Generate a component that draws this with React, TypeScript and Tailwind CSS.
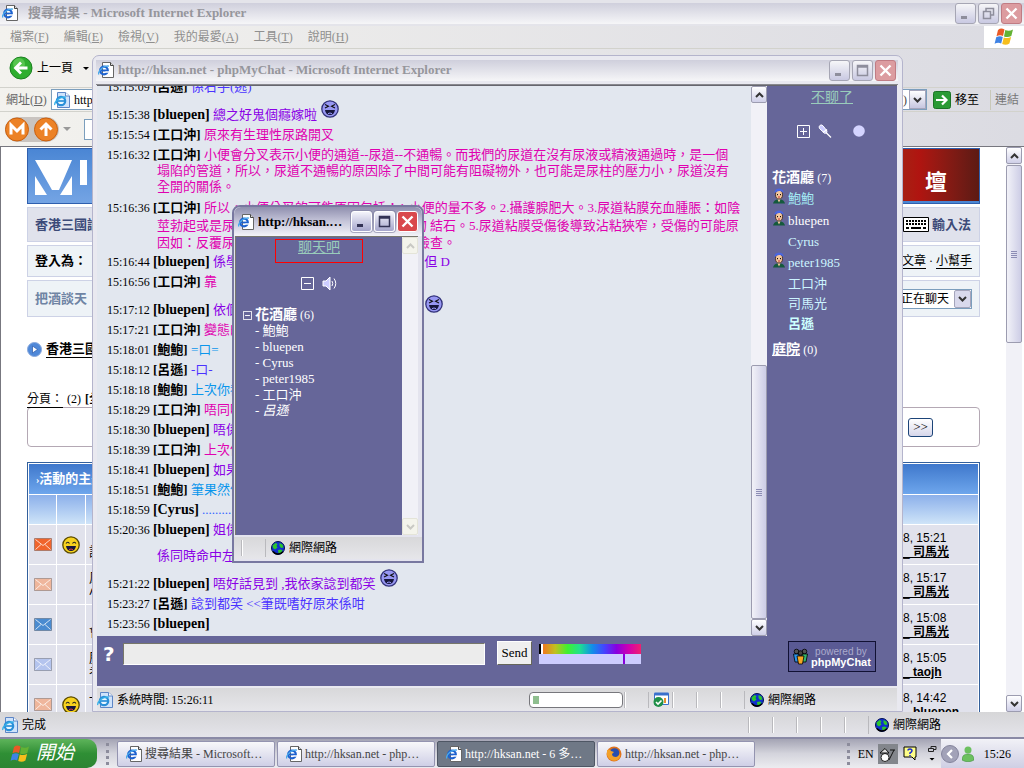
import React from "react";
import { clsx } from "clsx";

type Speaker = "bluepen" | "工口沖" | "鮑鮑" | "呂遜" | "Cyrus";

interface Message {
  time: string;
  from: Speaker;
  lines: string[];
  laugh?: boolean;
  tall?: boolean;
}

const speakerColor: Record<Speaker, string> = {
  bluepen: "text-[#8a00e6]",
  "工口沖": "text-[#e000b0]",
  "鮑鮑": "text-[#0a96ec]",
  "呂遜": "text-[#4a33ff]",
  Cyrus: "text-[#3366ff]",
};

const messages: Message[] = [
  { time: "15:15:09", from: "呂遜", lines: ["係右手(逃)"] },
  { time: "15:15:38", from: "bluepen", lines: ["總之好鬼個癮嫁啦"], laugh: true },
  { time: "15:15:54", from: "工口沖", lines: ["原來有生理性尿路開叉"] },
  {
    time: "15:16:32",
    from: "工口沖",
    lines: [
      "小便會分叉表示小便的通道--尿道--不通暢。而我們的尿道在沒有尿液或精液通過時，是一個",
      "塌陷的管道，所以，尿道不通暢的原因除了中間可能有阻礙物外，也可能是尿柱的壓力小，尿道沒有",
      "全開的關係。",
    ],
  },
  {
    time: "15:16:36",
    from: "工口沖",
    tall: true,
    lines: [
      "所以，小便分叉的可能原因包括：1.小便的量不多。2.攝護腺肥大。3.尿道粘膜充血腫脹：如陰",
      "莖勃起或是尿道口被分泌物堵住。4.尿道有異物 結石。5.尿道粘膜受傷後導致沾粘狹窄，受傷的可能原",
      "因如：反覆尿道發炎、外傷等，最好到醫院做檢查。",
    ],
  },
  { time: "15:16:44", from: "bluepen", lines: ["係學校又唔可以成日走出去廁所咁樣,但 D"] },
  { time: "15:16:56", from: "工口沖", lines: ["靠"] },
  { time: "15:17:12", from: "bluepen", lines: ["依個話題都可以講得咁詳細真係好勁"], laugh: true },
  { time: "15:17:21", from: "工口沖", lines: ["變態的人是你"] },
  { time: "15:18:01", from: "鮑鮑", lines: ["=口="] },
  { time: "15:18:12", from: "呂遜", lines: ["-口-"] },
  { time: "15:18:18", from: "鮑鮑", lines: ["上次你都係咁講"] },
  { time: "15:18:29", from: "工口沖", lines: ["唔同唔同"] },
  { time: "15:18:30", from: "bluepen", lines: ["唔係我講架"] },
  { time: "15:18:39", from: "工口沖", lines: ["上次係另一樣"] },
  { time: "15:18:41", from: "bluepen", lines: ["如果係就好笑"] },
  { time: "15:18:51", from: "鮑鮑", lines: ["筆果然係好勁"] },
  { time: "15:18:59", from: "Cyrus", lines: ["......................"] },
  { time: "15:20:36", from: "bluepen", lines: ["姐係你哋兩個人 , 都一齊講緊同樣咁", "係同時命中左對方"] },
  { time: "15:21:22", from: "bluepen", lines: ["唔好話見到 ,我依家諗到都笑"], laugh: true },
  { time: "15:23:27", from: "呂遜", lines: ["諗到都笑 <<筆既嗜好原來係咁"] },
  { time: "15:23:56", from: "bluepen", lines: [""] },
];

const menus = [
  ["檔案", "F"],
  ["編輯", "E"],
  ["檢視", "V"],
  ["我的最愛", "A"],
  ["工具", "T"],
  ["說明", "H"],
];

const topics = [
  { time: "8, 15:21", who: "司馬光", mail: "#f0642c", smile: true, title: ["", "討論"] },
  { time: "8, 15:17", who: "司馬光", mail: "#efb69c", smile: false, title: ["風雲", "小說"] },
  { time: "8, 15:08", who: "司馬光", mail: "#4a8bd0", smile: false, title: ["", "會員"] },
  { time: "8, 15:05", who: "taojh", mail: "#b4c4ee", smile: false, title: ["歷史", "考證"] },
  { time: "8, 14:42", who: "bluepen", mail: "#efb69c", smile: true, title: ["一般", ""] },
];

/* ---------- icons ---------- */

function IeIcon() {
  return (
    <svg className="h-4 w-4 shrink-0" viewBox="0 0 16 16" aria-hidden="true">
      <path d="M4.5.5h8l3 3v12h-11z" fill="#fff" stroke="#666" />
      <path d="M12.5.5v3h3" fill="#ddd" stroke="#444" />
      <circle cx="6" cy="8.5" r="3.8" fill="none" stroke="#1d62cf" strokeWidth="2.2" />
      <path d="M3 8.5h7" stroke="#1d62cf" strokeWidth="1.8" />
      <path d="M7.5 10h4" stroke="#fff" strokeWidth="1.4" />
      <path d="M.8 12.5C-.5 9 6 3 11 4.2" fill="none" stroke="#49a8ea" strokeWidth="1.3" />
    </svg>
  );
}

function PageIcon() {
  return (
    <svg className="h-4 w-4 shrink-0" viewBox="0 0 16 16" aria-hidden="true">
      <path d="M3.5.5h8l4 3.500v11.500h-12z" fill="#cfe3fb" stroke="#5d86c6" />
      <path d="M11.5.5V4h4" fill="#fff" stroke="#5d86c6" />
      <circle cx="7" cy="9" r="4.2" fill="#e8f6ff" stroke="#2a8fd8" strokeWidth="2.2" />
      <path d="M4 9h7" stroke="#2a8fd8" strokeWidth="1.7" />
      <path d="M.8 13C0 10 6 4 12 5.2" fill="none" stroke="#35b0e8" strokeWidth="1.3" />
    </svg>
  );
}

function Globe() {
  return (
    <svg className="h-[14px] w-[14px] shrink-0" viewBox="0 0 14 14" aria-hidden="true">
      <circle cx="7" cy="7" r="6.5" fill="#102fd0" stroke="#001050" />
      <path d="M1.5 4.500 4.500 2l2 1-1 2 1 1.500-2.500 2-2-1.500zM8.500 2l3 1.500 1 3-2.500.5-1.500-2zM7 9l3-.5 1.500 1-1.500 2.500-2.500.5z" fill="#2cc52c" />
      <path d="M2 10.500c2 3.200 7 3.400 10 .3" fill="none" stroke="#000" strokeWidth="1.5" />
    </svg>
  );
}

function Laugh({ yellow, className }: { yellow?: boolean; className?: string }) {
  return (
    <svg className={clsx("h-[18px] w-[18px]", className)} viewBox="0 0 18 18" aria-hidden="true">
      <circle cx="9" cy="9" r="8.2" fill={yellow ? "#f7d21e" : "#9797f2"} stroke={yellow ? "#5a4a00" : "#33337a"} strokeWidth="1.3" />
      {yellow ? (
        <path d="M4 7.500q1.500-2.500 3.500 0M10.500 7.500q1.500-2.500 3.500 0" fill="none" stroke="#222" strokeWidth="1.1" />
      ) : (
        <path d="m4 4.500 3.500 1.700L4 8M14 4.500l-3.500 1.700L14 8" fill="none" stroke="#111" strokeWidth="1.1" />
      )}
      <path d="M4 10h10q-.8 5-5 5t-5-5z" fill="#16163c" />
      <path d="M7 13.600q2-1.200 4 0" stroke={yellow ? "#d44" : "#99f"} fill="none" />
    </svg>
  );
}

function Envelope({ color }: { color: string }) {
  return (
    <svg className="mx-auto h-[13px] w-[18px]" viewBox="0 0 18 13" aria-hidden="true">
      <path d="M.5.5h17v12H.5z" fill={color} stroke="#000" strokeOpacity=".25" />
      <path d="m1.500 1.500 7.500 6 7.500-6M1.500 11.500 7 6.500M16.500 11.500 11 6.500" fill="none" stroke="#fff" strokeOpacity=".75" />
    </svg>
  );
}

function WindowsFlag({ className }: { className?: string }) {
  return (
    <svg className={className} viewBox="0 0 20 18" aria-hidden="true">
      <path d="M4 2q3-2.500 6.500-.5L9 8Q6 6.300 2.500 8.300z" fill="#ea5a26" />
      <path d="M11.300 2Q15 3.800 19 1.500L17.300 8q-3.500 2-7.300.4z" fill="#63b234" />
      <path d="M2.200 9.300Q5.800 7.400 8.800 9L7.200 15.500Q4 14 .600 15.800z" fill="#3f83e4" />
      <path d="M9.800 9.400q3.500 1.500 7.300-.3l-1.700 6.500q-3.500 2.200-7.200.4z" fill="#f6be1c" />
    </svg>
  );
}

function Avatar() {
  return (
    <svg className="h-4 w-[14px] shrink-0" viewBox="0 0 14 16" aria-hidden="true">
      <path d="M1 15.500q1-3.500 4-4h4q3 .5 4 4z" fill="#145a3c" />
      <ellipse cx="7" cy="6.500" rx="3.500" ry="4.500" fill="#f4c79e" stroke="#3a2012" strokeWidth=".8" />
      <path d="M2.500 5Q2 1 7 .500q5 .5 4.500 4.500Q9 2.500 7 3T2.500 5z" fill="#4a66e0" />
      <path d="M5.500 6v1.200M8.500 6v1.200" stroke="#111" />
      <path d="M6 9h2" stroke="#c33" />
      <path d="m5.500 11.500 1.500 3 1.500-3z" fill="#f4c79e" />
    </svg>
  );
}

function ToggleBox({ plus, small }: { plus?: boolean; small?: boolean }) {
  return (
    <svg className={small ? "h-[9px] w-[9px]" : "h-[13px] w-[13px]"} viewBox="0 0 13 13" aria-hidden="true">
      <path d={plus ? "M.5.5h12v12H.5zM3 6.500h7M6.500 3v7" : "M.5.5h12v12H.5zM3 6.500h7"} fill="none" stroke="#fff" strokeWidth={small ? 1.4 : 1} />
    </svg>
  );
}

function Caret({ up, className }: { up?: boolean; className?: string }) {
  return (
    <svg className={clsx("h-[6px] w-[9px]", className)} viewBox="0 0 9 6" aria-hidden="true">
      <path d={up ? "M1 5 4.500 1.500 8 5" : "M1 1l3.500 3.500L8 1"} fill="none" stroke="currentColor" strokeWidth="2" />
    </svg>
  );
}

/* ---------- window parts ---------- */

type ButtonKind = "min" | "max" | "restore" | "close";

function CaptionButton({ kind, active }: { kind: ButtonKind; active?: boolean }) {
  const label = { min: "最小化", max: "最大化", restore: "還原", close: "關閉" }[kind];
  return (
    <button
      aria-label={label}
      className={clsx(
        "flex h-[21px] w-[21px] items-center justify-center rounded-[3px] border",
        kind === "close"
          ? active
            ? "border-white bg-[#d9484c] text-white"
            : "border-[#c07c84] bg-[#dc9ca0] text-white"
          : active
            ? "border-white bg-linear-to-b from-[#f4f4fb] to-[#a6a6cc] text-[#333355] ring-1 ring-[#7d7d9f]/60"
            : "border-[#a6a6b4] bg-linear-to-b from-[#f6f6f8] to-[#c9c9e2] text-[#8e8e9c]"
      )}
    >
      <svg className="h-[15px] w-[15px]" viewBox="0 0 15 15" fill="none" stroke="currentColor" aria-hidden="true">
        {kind === "min" && <path d="M3 11.500h6" strokeWidth="3" />}
        {kind === "max" && <path d="M2.500 2.500h10v10h-10zM2.500 4h10" strokeWidth="1.5" />}
        {kind === "restore" && <path d="M5 5V2.500h7.500V9H10M2.500 5.500h7v7h-7z" strokeWidth="1.5" />}
        {kind === "close" && <path d="m2.500 2.500 10 10M12.500 2.500l-10 10" strokeWidth="2.4" />}
      </svg>
    </button>
  );
}

function Scrollbar({ thumb, lead, disabled }: { thumb?: string; lead?: string; disabled?: boolean }) {
  const arrow = clsx(
    "flex h-[17px] shrink-0 items-center justify-center rounded-[2px] border",
    disabled ? "border-[#e4e4d8] bg-[#f4f4ec] text-[#c9c9c4]" : "border-[#9c9cb0] bg-linear-to-b from-white to-[#cfcfe8] text-[#333]"
  );
  return (
    <div className="flex w-4 shrink-0 flex-col bg-[#f1f1f7]" aria-hidden="true">
      <div className={arrow}><Caret up /></div>
      <div className={lead ?? "grow"} />
      {thumb && (
        <div className={clsx("flex flex-col items-center justify-center gap-px rounded-[2px] border border-[#9c9cb0] bg-linear-to-r from-[#f2f2f8] to-[#cdcde6]", thumb)}>
          <i className="h-px w-[6px] bg-[#8c8cb4]" />
          <i className="h-px w-[6px] bg-[#8c8cb4]" />
          <i className="h-px w-[6px] bg-[#8c8cb4]" />
          <i className="h-px w-[6px] bg-[#8c8cb4]" />
        </div>
      )}
      {lead && <div className="grow" />}
      <div className={arrow}><Caret /></div>
    </div>
  );
}

function StatusCells({ count }: { count: number }) {
  return (
    <>
      {Array.from({ length: count }, (_, i) => (
        <div key={i} className="h-4 w-6 shrink-0 border-l border-[#b9b9bd] shadow-[inset_1px_0_0_#fff]" />
      ))}
    </>
  );
}

interface TitleBarProps {
  title: string;
  active?: boolean;
  roomy?: boolean;
  buttons: ButtonKind[];
}

function TitleBar({ title, active, roomy, buttons }: TitleBarProps) {
  return (
    <div
      className={clsx(
        "flex shrink-0 items-center",
        active
          ? "h-[29px] rounded-t-[7px] bg-linear-to-b from-[#8f8fae] via-[#c6c6da] to-[#f3f3f8] pl-1 pr-[4px] text-black"
          : "bg-linear-to-b from-[#cfcfdc] to-[#f6f6f8] pl-[2px] pr-[2px] text-[#96969c]",
        roomy ? "gap-[10px]" : "gap-1"
      )}
    >
      <IeIcon />
      <h2 className="min-w-0 grow truncate text-[13px] leading-5 font-bold">{title}</h2>
      <div className="flex gap-[2px]">
        {buttons.map((kind) => (
          <CaptionButton key={kind} kind={kind} active={active} />
        ))}
      </div>
    </div>
  );
}

/* ---------- browser in the back ---------- */

function Toolbars() {
  return (
    <div className="shrink-0 bg-linear-to-r from-[#f3f2ee] to-[#dbdbe2]">
      <div className="flex h-[23px] items-stretch border-b border-[#d2d2cc]">
        <nav className="flex grow items-center gap-[15px] pl-[10px] text-[12px] text-[#8f8f8f]">
          {menus.map(([name, key]) => (
            <button key={key}>
              {name}(<u>{key}</u>)
            </button>
          ))}
        </nav>
        <div className="flex w-10 items-center justify-center bg-white">
          <WindowsFlag className="h-[18px] w-5" />
        </div>
      </div>

      <div className="flex h-[39px] items-center border-b border-[#d2d2cc] pl-[9px] text-[12px]">
        <button className="flex items-center gap-1">
          <svg className="h-6 w-6" viewBox="0 0 24 24" aria-hidden="true">
            <circle cx="12" cy="12" r="11" fill="#2fae2f" stroke="#1c8120" />
            <circle cx="10" cy="8" r="6" fill="#7fdc70" opacity=".5" />
            <path d="M18.500 12H7M12 6.500 6.500 12l5.500 5.500" fill="none" stroke="#fff" strokeWidth="2.8" />
          </svg>
          上一頁
        </button>
        <span className="ml-[10px] border-x-[3px] border-t-[3px] border-x-transparent border-t-black" />
      </div>

      <div className="flex h-6 items-center border-b border-[#d2d2cc] pl-[6px] text-[12px]">
        <label htmlFor="address" className="w-[45px] text-[#666]">
          網址(<u>D</u>)
        </label>
        <div className="flex h-[21px] min-w-0 grow items-center border border-[#7b9ebd] bg-white pl-[2px]">
          <PageIcon />
          <input id="address" className="min-w-0 grow pl-1 outline-none" defaultValue="http://www.hksan.net/forum/search.php?search_id=newposts" />
          <span className="text-[#444]">)</span>
          <button aria-label="網址清單" className="ml-[2px] flex h-[19px] w-[17px] items-center justify-center border border-[#a5a5bb] bg-linear-to-b from-white to-[#c6c6e0] text-[#333]">
            <Caret />
          </button>
        </div>
        <button className="ml-[6px] flex items-center gap-1">
          <svg className="h-[18px] w-[18px]" viewBox="0 0 18 18" aria-hidden="true">
            <rect x=".5" y=".5" width="17" height="17" rx="2" fill="#2a9a35" stroke="#1b7426" />
            <path d="M3 9h10M9 4.500 13.500 9 9 13.500" fill="none" stroke="#fff" strokeWidth="2.2" />
          </svg>
          移至
        </button>
        <span className="ml-[11px] h-5 w-px bg-[#c8c8b8]" />
        <span className="w-[33px] pl-1 text-[#777]">連結</span>
      </div>

      <div className="flex h-[35px] items-center border-b border-[#77777f] pl-1">
        <svg className="h-[27px] w-[56px]" viewBox="0 0 56 27" aria-hidden="true">
          <rect x="1" y="1" width="54" height="25" rx="12.5" fill="#c9c4c0" />
          <circle cx="13" cy="13.5" r="11.5" fill="#ec8226" stroke="#c96010" />
          <circle cx="42" cy="13.5" r="11.5" fill="#ec8226" stroke="#c96010" />
          <path d="M7 18.500V9l6 6 6-6v9.500" fill="none" stroke="#fff" strokeWidth="3" />
          <path d="M42 20V8.500M36.500 13.500 42 8l5.500 5.500" fill="none" stroke="#fff" strokeWidth="3" />
        </svg>
        <span className="ml-[3px] border-x-4 border-t-4 border-x-transparent border-t-[#999]" />
        <input aria-label="搜尋" className="ml-[13px] h-[21px] w-[300px] border border-[#7b9ebd] bg-white" />
      </div>
    </div>
  );
}

function ForumPage() {
  const panel = "flex items-center justify-between border border-[#cdd2e6] pl-[7px] text-[13px]";
  return (
    <div className="flex min-h-0 grow border-l border-[#77777f] bg-white pr-[2px]">
      <main className="min-w-0 grow overflow-hidden px-[26px]">
        <header className="mt-px flex h-14 justify-between border border-[#2f5fae] bg-linear-to-b from-[#4a86d4] to-[#74a4e4]">
          <div className="flex items-end pl-[7px]">
            <svg className="h-[54px] w-[80px]" viewBox="0 0 80 54" aria-hidden="true">
              <path d="M0 11h37L24 41h-7zM0 27l12 19H0zM37 27v19H25z" fill="#fff" />
              <path d="M45 11h7v25h-7z" fill="#fff" />
            </svg>
          </div>
          <div className="flex w-[120px] items-center justify-end border-b-2 border-[#4a86d4] bg-linear-to-r from-[#8c3018] via-[#b01410] to-[#5c1a14] pr-8">
            <span className="pt-4 text-[22px] leading-6 font-bold text-white">壇</span>
          </div>
        </header>

        <div className={clsx(panel, "mt-[3px] h-[35px] bg-[#e0e2ec] pr-2 font-bold text-[#3c4a78]")}>
          <span>香港三國論壇</span>
          <a href="#ime" className="flex items-center gap-[3px]">
            <svg className="h-[15px] w-[26px]" viewBox="0 0 26 15" aria-hidden="true">
              <path d="M.5.5h25v14H.5z" fill="#fff" stroke="#000" />
              <path d="M3 4h20M3 7h20" stroke="#000" strokeWidth="2" strokeDasharray="2 1" />
              <path d="M3 11h3M8 11h10M20 11h3" stroke="#000" strokeWidth="2" />
            </svg>
            輸入法
          </a>
        </div>
        <div className={clsx(panel, "mt-[3px] h-8 bg-[#eef3f7] pr-[7px] text-black")}>
          <span className="font-bold">登入為：</span>
          <span className="text-[12px]">
            <a href="#posts" className="border-b border-black">文章</a> · <a href="#help" className="border-b border-black">小幫手</a>
          </span>
        </div>
        <div className={clsx(panel, "mt-[3px] h-[37px] bg-[#eef3f7] pr-[7px] text-[#6f84a4]")}>
          <span className="font-bold">把酒談天</span>
          <div className="relative flex items-center">
            <select aria-label="狀態" className="h-5 w-[110px] appearance-none border border-[#7b9ebd] bg-white pl-[38px] text-[12px] text-black">
              <option>正在聊天</option>
            </select>
            <span className="pointer-events-none absolute right-px flex h-[18px] w-[17px] items-center justify-center rounded-[2px] border border-[#a5a5bb] bg-[#d9d9ec] text-[#333]">
              <Caret />
            </span>
          </div>
        </div>

        <div className="mt-[22px] flex h-5 items-center gap-1 text-[13px] font-bold">
          <svg className="h-[15px] w-[15px]" viewBox="0 0 15 15" aria-hidden="true">
            <circle cx="7.5" cy="7.5" r="7" fill="#4f88d8" stroke="#88a8dc" />
            <path d="m5.500 4 5 3.500-5 3.500z" fill="#fff" stroke="#2a58a8" strokeWidth=".7" />
          </svg>
          <a href="#index" className="border-b border-black leading-4">香港三國論壇</a>
        </div>
        <div className="mt-8 flex h-4 items-center gap-1 text-[12px]">
          <a href="#pages" className="border-b border-black leading-4">分頁：</a>
          <span>(2)</span>
          <b>[全部]</b>
        </div>
        <div className="flex h-10 items-center justify-end rounded-[4px] border border-[#b4a8b4] pr-[46px]">
          <button className="h-[19px] w-[25px] rounded-[3px] border border-[#1c4478] bg-linear-to-b from-white to-[#d6d6ea] text-[13px] leading-4">&gt;&gt;</button>
        </div>

        <table className="mt-[15px] w-full border-separate border-spacing-px border border-[#33609c] bg-white text-[13px]">
          <thead>
            <tr className="h-[30px] bg-linear-to-b from-[#3f78cc] to-[#6ea6ec] text-left text-white">
              <th colSpan={4} className="pl-[7px]"><span className="text-[10px]">›</span>活動的主題</th>
            </tr>
            <tr className="h-[29px] bg-linear-to-b from-[#8cb0ea] to-[#cfe4f8]">
              <td className="w-[27px]" />
              <td className="w-[28px]" />
              <td />
              <td className="w-[75px]" />
            </tr>
          </thead>
          <tbody>
            {topics.map((topic) => (
              <tr key={topic.time} className="h-[39px] bg-[#e1e2ec]">
                <td><Envelope color={topic.mail} /></td>
                <td>{topic.smile && <Laugh yellow className="mx-auto" />}</td>
                <td className="pl-[3px] leading-[14px]">
                  {topic.title.map((line, i) => (
                    <div key={i} className="h-[14px]">{line}</div>
                  ))}
                </td>
                <td className="[font-family:'Liberation_Sans','Noto_Sans_CJK_TC',sans-serif] text-[12px] leading-[14px]">
                  {topic.time}
                  <br />
                  <a href="#user" className="underline">
                    _ <b>{topic.who}</b>
                  </a>
                </td>
              </tr>
            ))}
          </tbody>
        </table>
      </main>
      <Scrollbar thumb="h-[178px]" lead="h-px" />
    </div>
  );
}

/* ---------- chat window ---------- */

function MessageRow({ message }: { message: Message }) {
  const { time, from, lines, laugh, tall } = message;
  const multi = lines.length > 2;
  return (
    <li
      className={clsx(
        "pl-[60px] -indent-[50px] whitespace-nowrap",
        laugh && "pt-2",
        !multi && "leading-5",
        multi && !tall && "py-[2px] leading-4",
        tall && "pt-[2px] pb-px leading-[17px]"
      )}
    >
      <time className="text-[12px]">{time}</time>{" "}
      <b className={from === "bluepen" || from === "Cyrus" ? "text-[14px]" : "text-[13px]"}>[{from}]</b>{" "}
      <span className={speakerColor[from]}>
        {lines[0]}
        {lines.slice(1).map((line) => (
          <span key={line} className={clsx("block indent-0", !multi && "pt-[6px]")}>{line}</span>
        ))}
      </span>
      {laugh && <Laugh className="-mt-[5px] ml-1 inline-block align-top" />}
    </li>
  );
}

function UserList() {
  const users = [
    { name: "鮑鮑", avatar: true, cls: "text-[#a4ecf4]" },
    { name: "bluepen", avatar: true, cls: "text-white" },
    { name: "Cyrus", cls: "text-[#ccf4ff]" },
    { name: "peter1985", avatar: true, cls: "text-[#ccf4ff]" },
    { name: "工口沖", cls: "text-[#ccf4ff]" },
    { name: "司馬光", cls: "text-[#ccf4ff]" },
    { name: "呂遜", cls: "font-bold text-[#ccffff]" },
  ];
  return (
    <aside className="w-[130px] shrink-0 px-[5px] text-[13px] text-white">
      <div className="pt-[2px] text-center leading-5">
        <a href="#quit" className="text-[14px] text-[#99ccbb] underline">不聊了</a>
      </div>
      <div className="mt-4 flex items-center pl-[25px]">
        <button aria-label="展開"><ToggleBox plus /></button>
        <svg className="ml-2 h-[14px] w-[14px]" viewBox="0 0 14 14" aria-hidden="true">
          <path d="M1 2.500 3 .800l2 1L9 7l-.5 2-2 .3L1.500 4.500z" fill="#ccccff" stroke="#fff" />
          <path d="m5 8.500 4-3M8 8.500l5 5" stroke="#fff" strokeWidth="1.3" />
        </svg>
        <svg className="ml-[21px] h-3 w-3" viewBox="0 0 12 12" aria-hidden="true">
          <circle cx="6" cy="6" r="5.8" fill="#d4d4ff" />
        </svg>
      </div>
      <h3 className="mt-[30px] leading-5">
        <b className="text-[14px]">花酒廳</b> <span className="text-[12px]">(7)</span>
      </h3>
      <ul>
        {users.map((user) => (
          <li key={user.name} className={clsx("flex gap-[2px]", user.avatar ? "h-[22px] leading-[22px]" : "h-5 pl-4 leading-5", user.cls)}>
            {user.avatar && <Avatar />}
            <a href="#user">{user.name}</a>
          </li>
        ))}
      </ul>
      <p className="mt-[6px] leading-5">
        <a href="#room" className="text-[14px] font-bold underline">庭院</a> <span className="text-[12px]">(0)</span>
      </p>
    </aside>
  );
}

function Composer() {
  return (
    <form className="flex h-[50px] shrink-0 items-start bg-[#666699] pt-[5px] pr-[21px] pl-[6px]" onSubmit={(e) => e.preventDefault()}>
      <label htmlFor="msg" className="w-5 text-[20px] leading-[26px] font-bold text-white [font-family:'DejaVu_Sans',sans-serif]">?</label>
      <input id="msg" className="mt-[2px] h-[22px] w-[362px] border border-[#77776a] border-r-white border-b-white bg-[#ececec] px-1 text-[13px]" />
      <button className="ml-3 h-6 w-[35px] border border-white border-r-[#66665a] border-b-[#66665a] bg-[#efefef] text-[13px] leading-5">Send</button>
      <div className="mt-[3px] ml-[7px] w-[102px]">
        <div className="flex h-[10px]">
          <i className="w-[2px] bg-black" />
          <i className="w-[2px] bg-white" />
          <i className="grow bg-[linear-gradient(to_right,#f07820,#c0c020,#40f030,#20e090,#1090e8,#4444ff,#8800e0,#d000b0,#f02070)]" />
        </div>
        <div className="flex h-[10px] justify-end bg-[#ccccff] pr-4">
          <i className="w-[2px] bg-[#8800dd]" />
        </div>
      </div>
      <div className="ml-auto flex h-[31px] w-[88px] items-center gap-[3px] border border-[#111133] bg-[#5a5a94] pl-1 text-white [font-family:'Liberation_Sans',sans-serif]">
        <svg className="h-[17px] w-[15px] shrink-0" viewBox="0 0 15 17" stroke="#000" strokeWidth=".8" aria-hidden="true">
          <circle cx="3.5" cy="3.5" r="2.3" fill="#555" />
          <circle cx="11.5" cy="3.5" r="2.3" fill="#555" />
          <path d="M.5 6h5.500v8H2z" fill="#2c92e8" />
          <path d="M9 6h5.500L13 14H9z" fill="#35b56c" />
          <circle cx="7.5" cy="5" r="2.3" fill="#444" />
          <path d="M4 8h7l-1.500 8h-4z" fill="#f5a623" />
        </svg>
        <div className="text-center leading-[10px]">
          <div className="text-[10px] text-[#aaaacc]">powered by</div>
          <div className="text-[11px] font-bold">phpMyChat</div>
        </div>
      </div>
    </form>
  );
}

function ChatWindow() {
  return (
    <section className="absolute top-[55px] left-[92px] flex h-[657px] w-[811px] flex-col overflow-hidden rounded-t-[7px] border border-[#b4b4cc] bg-[#e9e9f0] pr-[5px] pl-1">
      <div className="-mx-px flex h-[29px] shrink-0 flex-col justify-center border-b border-[#88888e]">
        <TitleBar title="http://hksan.net - phpMyChat - Microsoft Internet Explorer" buttons={["min", "max", "close"]} />
      </div>
      <div className="flex min-h-0 grow flex-col border-t border-[#66666e] bg-[#666699]">
        <div className="flex min-h-0 grow">
          <div className="min-w-0 grow overflow-hidden bg-[#e2e7ef] text-[13px] text-black">
            <ul className="-mt-[9px]">
              {messages.map((message) => (
                <MessageRow key={message.time} message={message} />
              ))}
            </ul>
          </div>
          <Scrollbar thumb="h-[254px]" />
          <UserList />
        </div>
        <Composer />
      </div>
      <footer className="mt-[2px] flex h-[23px] shrink-0 items-center bg-linear-to-b from-[#d8d8da] to-[#e6e6ea] text-[12px]">
        <PageIcon />
        <span className="grow pl-1">系統時間: 15:26:11</span>
        <div className="mr-px h-4 w-[94px] rounded-[4px] border border-[#77777c] bg-white p-[3px]">
          <div className="h-[8px] w-[6px] bg-[#8fbf8f]" />
        </div>
        <StatusCells count={1} />
        <div className="flex h-4 w-6 justify-center border-l border-[#b9b9bd]">
          <svg className="h-4 w-4" viewBox="0 0 16 16" aria-hidden="true">
            <path d="M1.500 1.500h14v11h-14z" fill="#fff" stroke="#3a70cc" />
            <path d="M1.500 2h14" stroke="#3a70cc" strokeWidth="3" />
            <path d="M12 6v5" stroke="#e89030" strokeWidth="2" />
            <circle cx="5.5" cy="10" r="5" fill="#209048" />
            <path d="m3 10 2 2 3.500-3.500" fill="none" stroke="#fff" strokeWidth="1.6" />
          </svg>
        </div>
        <StatusCells count={3} />
        <div className="flex w-[153px] items-center gap-1 border-l border-[#b9b9bd] pl-[5px]">
          <Globe />
          網際網路
        </div>
      </footer>
    </section>
  );
}

function LobbyWindow() {
  const names = ["鮑鮑", "bluepen", "Cyrus", "peter1985", "工口沖"];
  return (
    <section className="absolute top-[205px] left-[232px] flex h-[358px] w-[192px] flex-col rounded-t-[8px] border-2 border-[#7878a0] bg-[#e4e4ee] pb-[2px]">
      <TitleBar title="http://hksan.net - 6 多少人在聊天" active buttons={["min", "max", "close"]} />
      <div className="mr-1 ml-px flex min-h-0 grow border-t border-l border-[#77776e] bg-[#666699] text-[13px] text-white">
        <div className="min-w-0 grow">
          <div className="mx-auto mt-[2px] flex h-6 w-[88px] justify-center border border-[#ff0000]">
            <a href="#enter" className="text-[14px] leading-4 text-[#99ccbb] underline">聊天吧</a>
          </div>
          <div className="mt-[12px] flex h-4 items-center justify-center gap-2">
            <button aria-label="收合"><ToggleBox /></button>
            <svg className="h-[15px] w-[15px]" viewBox="0 0 15 15" fill="none" stroke="#fff" aria-hidden="true">
              <path d="M1 5h3l4-4v13l-4-4H1z" fill="#ccccff" />
              <path d="M10 5q1.500 2.500 0 5M12 2.500q3.500 5 0 10" />
            </svg>
          </div>
          <div className="mt-4 flex items-center gap-[3px] pl-[7px] leading-4">
            <ToggleBox small />
            <b className="text-[14px]">花酒廳</b>
            <span className="text-[12px]">(6)</span>
          </div>
          <ul className="pl-[19px] leading-4">
            {names.map((name) => (
              <li key={name}>- {name}</li>
            ))}
            <li>- <i>呂遜</i></li>
          </ul>
        </div>
        <Scrollbar disabled />
      </div>
      <footer className="mt-[2px] flex h-[22px] shrink-0 items-center bg-linear-to-b from-[#d8d8da] to-[#e6e6ea] pl-[7px] text-[12px]">
        <StatusCells count={1} />
        <div className="flex items-center gap-1 border-l border-[#b9b9bd] pl-[5px]">
          <Globe />
          網際網路
        </div>
      </footer>
    </section>
  );
}

/* ---------- taskbar ---------- */

function Firefox() {
  return (
    <svg className="h-4 w-4 shrink-0" viewBox="0 0 16 16" aria-hidden="true">
      <circle cx="8" cy="8" r="7.5" fill="#e0721c" />
      <circle cx="8.5" cy="7" r="4.8" fill="#284fae" />
      <path d="M1 4q3-1 4 1l3 1-2 2q0 3 4 3 3-.5 4-4 1 6-4 7.500Q3 15.500 1 9z" fill="#f2a12a" />
    </svg>
  );
}

function Taskbar() {
  const tasks = [
    { label: "搜尋結果 - Microsoft Internet Explorer", icon: <IeIcon /> },
    { label: "http://hksan.net - phpMyChat", icon: <IeIcon /> },
    { label: "http://hksan.net - 6 多少人在聊天", icon: <IeIcon />, active: true },
    { label: "http://hksan.net - phpMyChat", icon: <Firefox /> },
  ];
  return (
    <div className="flex h-[31px] shrink-0 items-center border-t-2 border-[#8a8aa6] bg-linear-to-b from-[#a4a4b4] via-[#d4d4dc] to-[#ececf0] text-[12px]">
      <button className="flex h-full w-[97px] shrink-0 items-center gap-[6px] rounded-r-[10px] bg-linear-to-b from-[#5db45a] via-[#2f8f35] to-[#2c8432] pl-[10px] text-[19px] text-white italic">
        <WindowsFlag className="h-[18px] w-5" />
        開始
      </button>
      <div className="ml-[9px] h-[22px] w-[3px] border-l-[3px] border-dotted border-[#8c8c9c]" />
      <div className="ml-2 flex grow gap-[2px]">
        {tasks.map((task, i) => (
          <button
            key={i}
            className={clsx(
              "flex h-[26px] w-[158px] items-center gap-[3px] rounded-[2px] border pr-1 pl-2",
              task.active
                ? "border-[#4e5664] bg-[#6f7886] text-white"
                : "border-[#9494b0] bg-linear-to-b from-[#f8f8fa] to-[#cfcfe6] text-[#444]"
            )}
          >
            {task.icon}
            <span className="max-w-[120px] truncate">{task.label}</span>
          </button>
        ))}
      </div>
      <div className="h-[22px] w-[3px] border-l-[3px] border-dotted border-[#8c8c9c]" />
      <span className="ml-2 w-5 text-[12px]">EN</span>
      <svg className="h-5 w-5" viewBox="0 0 20 20" aria-hidden="true">
        <path d="M0 0h20v20H0z" fill="#83868c" />
        <circle cx="7" cy="13.5" r="4" fill="#fff" stroke="#222" />
        <path d="M2 9 7 4.500 11 9zM11 16l5-10M12 6h5" fill="#ddd" stroke="#111" />
      </svg>
      <svg className="ml-[5px] h-[15px] w-[14px]" viewBox="0 0 14 15" aria-hidden="true">
        <path d="M1 1h12v10h-1v3l-3-3H1z" fill="#ffff88" stroke="#000" />
        <path d="M5 4.500Q5 3 7 3t2 1.800Q9 6 7 7v1M7 9v1.300" fill="none" stroke="#1a2ad0" strokeWidth="1.5" />
      </svg>
      <svg className="ml-[10px] h-5 w-[10px]" viewBox="0 0 10 20" aria-hidden="true">
        <path d="M4 4V2.500h5v3H7M1.500 4.500h5v3h-5z" fill="none" stroke="#222" />
        <path d="M2.500 14h5L5 16.500z" fill="#000" />
      </svg>
      <div className="ml-1 flex h-full items-center border-t border-[#f4f4fa] bg-linear-to-b from-[#f0f0f6] to-[#cfcfe4] pr-[13px]">
        <svg className="h-[18px] w-[18px]" viewBox="0 0 18 18" aria-hidden="true">
          <circle cx="9" cy="9" r="8.5" fill="#a2a2b8" stroke="#84849c" />
          <path d="M11 5 7 9l4 4" fill="none" stroke="#fff" strokeWidth="2.2" />
        </svg>
        <svg className="ml-[3px] h-4 w-3" viewBox="0 0 12 16" aria-hidden="true">
          <circle cx="6" cy="4" r="3.5" fill="#6cc060" />
          <path d="M0 14q0-6 6-6t6 6q-6 3.500-12 0z" fill="#6cc060" stroke="#3c9038" strokeWidth=".6" />
        </svg>
        <time className="pl-[10px]">15:26</time>
      </div>
    </div>
  );
}

export default function App() {
  return (
    <div className="relative flex h-screen w-full flex-col overflow-hidden bg-white text-black [font-family:'Liberation_Serif','Noto_Sans_CJK_TC',serif]">
      <div className="flex h-[26px] shrink-0 flex-col justify-center bg-[#e4e4ea]">
        <TitleBar title="搜尋結果 - Microsoft Internet Explorer" roomy buttons={["min", "restore", "close"]} />
      </div>
      <Toolbars />
      <ForumPage />
      <footer className="flex h-[25px] shrink-0 items-center bg-linear-to-b from-[#d6d6d8] to-[#e4e4ea] pl-[2px] text-[12px]">
        <PageIcon />
        <span className="grow pl-1">完成</span>
        <StatusCells count={5} />
        <div className="flex w-[156px] items-center gap-1 border-l border-[#b9b9bd] pl-[6px]">
          <Globe />
          網際網路
        </div>
      </footer>

      <ChatWindow />
      <LobbyWindow />
      <Taskbar />
    </div>
  );
}
